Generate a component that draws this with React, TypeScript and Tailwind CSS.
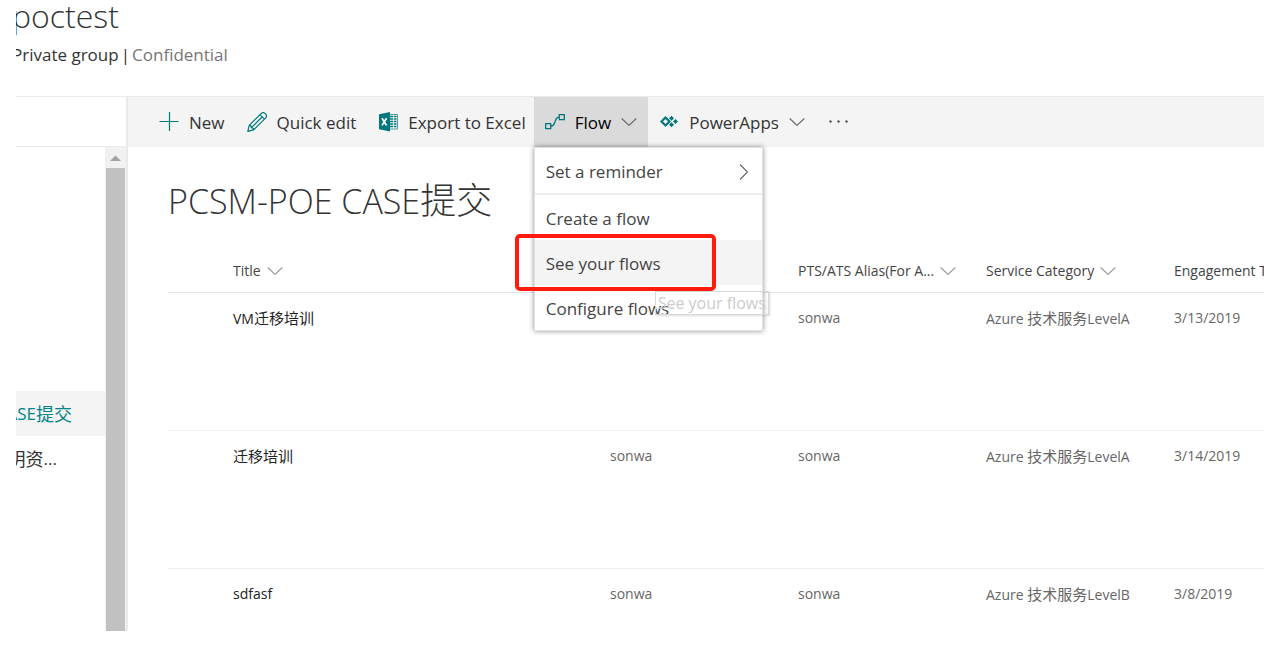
import React from 'react';

function Chevron({ className = '' }: { className?: string }) {
  return (
    <svg className={`h-2 w-4 shrink-0 ${className}`} viewBox="0 0 16 8" fill="none" stroke="currentColor" aria-hidden="true">
      <path d="M0.7 0.5 8 7.4l7.3-6.9" strokeWidth="1.1" />
    </svg>
  );
}

function PlusIcon() {
  return (
    <svg className="h-5 w-5 shrink-0 text-[#03787c]" viewBox="0 0 20 20" stroke="currentColor" aria-hidden="true">
      <path d="M0.5 9.500h19M10.500 0v19" strokeWidth="1.2" />
    </svg>
  );
}

function PencilIcon() {
  return (
    <svg className="h-5 w-5 shrink-0 text-[#03787c]" viewBox="0 0 20 20" fill="none" stroke="currentColor" strokeWidth="1.2" strokeLinejoin="round" aria-hidden="true">
      <path d="M0.8 19.3 2.2 13.4 14 1.6C15.2.4 17 .4 18.4 1.7 19.700 3.100 19.700 4.900 18.500 6.100L6.700 17.900Z" />
      <path d="M2.2 13.400c1.500.1 2.200.8 2.200 2.300 1.500 0 2.200.7 2.300 2.200M12.900 2.700l4.500 4.500M4.400 15.700 15 5" />
    </svg>
  );
}

function ExcelIcon() {
  return (
    <svg className="h-5 w-5 shrink-0 text-[#03787c]" viewBox="0 0 20 20" aria-hidden="true">
      <path d="M11 2.500h8.500v14.500H11z" fill="#f4f4f4" stroke="currentColor" strokeWidth="0.7" />
      <path d="M12 4.500h3M12 7h3M12 9.500h3M12 12h3M12 14.500h3M15.800 4.500h2.700M15.800 7h2.700M15.800 9.500h2.700M15.800 12h2.700M15.800 14.500h2.700" stroke="currentColor" strokeWidth="1.400" />
      <path d="M1 2.200 12 0v19.500L1 17.300z" fill="currentColor" />
      <path d="M4 6.200 8.500 13.400M8.500 6.200 4 13.400" stroke="#fff" strokeWidth="1.700" />
    </svg>
  );
}

function FlowIcon() {
  return (
    <svg className="h-5 w-5 shrink-0 text-[#03787c]" viewBox="0 0 20 20" fill="none" stroke="currentColor" strokeWidth="1.300" aria-hidden="true">
      <path d="M0.700 11.700h5v5h-5zM14.300 2.700h5v5h-5zM5.700 14.200c3.500 0 3-1.700 4.300-4.500s1-4.500 4.300-4.500" />
    </svg>
  );
}

function PowerAppsIcon() {
  return (
    <svg className="h-5 w-5 shrink-0 text-[#03787c]" viewBox="0 0 20 20" aria-hidden="true">
      <path d="M6.500 5.500 10.500 9.500 6.500 13.500 2.500 9.500z" fill="none" stroke="currentColor" strokeWidth="2.200" />
      <path d="M12.500 3.800 15 6.300 12.500 8.800 10 6.300zM12.500 10.200 15 12.700 12.500 15.200 10 12.700zM16.500 7l2.500 2.500-2.500 2.500L14 9.500z" fill="currentColor" />
    </svg>
  );
}

/* Sets runs of Chinese characters one step larger than the Latin text around them. */
function Mixed({ text, cjk }: { text: string; cjk: string }) {
  return (
    <>
      {text.split(/([\u4e00-\u9fff]+)/).map((part, i) =>
        i % 2 ? <span key={i} className={cjk}>{part}</span> : part,
      )}
    </>
  );
}

const commandClass = 'flex h-full items-center gap-[10px] pl-[11px] whitespace-nowrap';

function Command({ icon, label, menu = false, className = 'pr-[11px]' }: { icon: React.ReactNode; label: string; menu?: boolean; className?: string }) {
  return (
    <button type="button" className={`${commandClass} ${className}`}>
      {icon}
      <span className="pt-0.5">{label}</span>
      {menu && <Chevron className="text-[#666]" />}
    </button>
  );
}

function FlowMenu() {
  const item = 'flex h-[45px] w-full items-center px-[11px] pt-0.5 text-left';
  return (
    <ul className="absolute top-full left-0 z-10 w-[229px] border border-[#e2e2e2] bg-white text-[#444] shadow-[0_0_5px_rgba(0,0,0,0.45)]">
      <li className="border-b-2 border-[#eeeeee]">
        <button type="button" className={`${item} justify-between`}>
          Set a reminder
          <svg className="h-4 w-4" viewBox="0 0 16 16" fill="none" stroke="#666" aria-hidden="true">
            <path d="M5 0.500 12.500 8 5 15.500" strokeWidth="1.100" />
          </svg>
        </button>
      </li>
      <li>
        <button type="button" className={item}>Create a flow</button>
      </li>
      <li className="relative bg-[#f4f4f4]">
        <button type="button" className={item}>See your flows</button>
        <div className="pointer-events-none absolute -top-[6px] -left-5 h-[57px] w-[201px] rounded-[5px] border-4 border-[#ff1c0f]" />
        <div role="tooltip" className="absolute top-[51px] left-[120px] border border-[#d8d8d8] px-[2px] text-base leading-[22px] whitespace-nowrap text-[#ccc] shadow-[1px_1px_2px_rgba(0,0,0,0.15)]">
          See your flows
        </div>
      </li>
      <li>
        <button type="button" className={item}>Configure flows</button>
      </li>
    </ul>
  );
}

const rows = [
  { title: 'VM迁移培训', owner: '', alias: 'sonwa', category: 'Azure 技术服务LevelA', date: '3/13/2019' },
  { title: '迁移培训', owner: 'sonwa', alias: 'sonwa', category: 'Azure 技术服务LevelA', date: '3/14/2019' },
  { title: 'sdfasf', owner: 'sonwa', alias: 'sonwa', category: 'Azure 技术服务LevelB', date: '3/8/2019' },
];

function HeaderCell({ label, chevron = true }: { label: string; chevron?: boolean }) {
  return (
    <th className="overflow-hidden p-0 text-left font-normal">
      {label && (
        <button type="button" className="flex items-center gap-[6px] pt-0.5 whitespace-nowrap">
          {label}
          {chevron && <Chevron className="text-[#999]" />}
        </button>
      )}
    </th>
  );
}

function ListTable() {
  return (
    <table className="w-full table-fixed border-collapse text-sm text-[#666]">
      <colgroup>
        <col className="w-[65px]" />
        <col />
        <col className="w-[188px]" />
        <col className="w-[188px]" />
        <col className="w-[188px]" />
        <col className="w-[90px]" />
      </colgroup>
      <thead>
        <tr className="h-[43px] border-b border-[#e2e2e2] text-[#444]">
          <td />
          <HeaderCell label="Title" />
          <HeaderCell label="" />
          <HeaderCell label="PTS/ATS Alias(For A..." />
          <HeaderCell label="Service Category" />
          <HeaderCell label="Engagement Type" chevron={false} />
        </tr>
      </thead>
      <tbody>
        {rows.map((r, i) => (
          <tr key={i} className="h-[138px] border-b border-[#f0f0f0] align-top leading-5 last:h-[63px] last:border-b-0">
            <td />
            <td className="px-0 pt-[15px] text-[#222]"><Mixed text={r.title} cjk="text-[15px]" /></td>
            <td className="px-0 pt-[15px]">{r.owner}</td>
            <td className="px-0 pt-[15px]">{r.alias}</td>
            <td className="px-0 pt-[15px] whitespace-nowrap"><Mixed text={r.category} cjk="text-[15px]" /></td>
            <td className="px-0 pt-[15px]">{r.date}</td>
          </tr>
        ))}
      </tbody>
    </table>
  );
}

export default function App() {
  return (
    <div className="bg-white pr-[5px] pb-6 pl-4 font-['Open_Sans','Noto_Sans_CJK_SC',sans-serif] text-[#333]">
      <header className="h-24 overflow-hidden">
        <div className="-ml-1">
          <h1 className="text-[32px] leading-8 font-light">poctest</h1>
          <p className="flex gap-[2px] pt-[11px] text-[17px] leading-6">
            <span>Private group</span>
            <span>|</span>
            <span className="text-[#767676]">Confidential</span>
          </p>
        </div>
      </header>

      <div className="flex border-t border-[#eaeaea]">
        <aside className="w-[112px] shrink-0 border-r-2 border-[#eaeaea]">
          <div className="h-[50px] border-b border-[#eaeaea]" />
          <div className="flex h-[484px]">
            <nav className="flex min-w-0 flex-1 flex-col overflow-hidden pt-[244px] text-[17px]">
              <a href="#case" className="flex h-[45px] shrink-0 items-center justify-end bg-[#f4f4f4] pr-[33px] whitespace-nowrap text-[#038387]">
                <Mixed text="CASE提交" cjk="text-lg" />
              </a>
              <a href="#docs" className="flex h-[45px] shrink-0 items-center justify-end pr-12 whitespace-nowrap">
                <Mixed text="明资..." cjk="text-lg" />
              </a>
            </nav>
            <div className="flex w-[21px] flex-col bg-[#f1f1f1] px-px">
              <svg className="h-[21px] w-full shrink-0" viewBox="0 0 19 21" aria-hidden="true">
                <path d="M4 14h11L9.500 8.500z" fill="#a3a3a3" />
              </svg>
              <div className="flex-1 bg-[#c1c1c1]" />
            </div>
          </div>
        </aside>

        <main className="min-w-0 flex-1">
          <div className="flex h-[50px] items-center bg-[#f4f4f4] pl-5 text-[17px]">
            <Command icon={<PlusIcon />} label="New" />
            <Command icon={<PencilIcon />} label="Quick edit" />
            <Command icon={<ExcelIcon />} label="Export to Excel" className="pr-2" />
            <div className="relative h-full">
              <button type="button" aria-expanded="true" className={`${commandClass} bg-[#dadada] pr-[11px] text-black`}>
                <FlowIcon />
                <span className="pt-0.5">Flow</span>
                <Chevron className="text-[#666]" />
              </button>
              <FlowMenu />
            </div>
            <Command icon={<PowerAppsIcon />} label="PowerApps" menu className="pr-2" />
            <button type="button" aria-label="More" className="h-full px-4">
              <svg className="h-5 w-5" viewBox="0 0 20 20" fill="#555" aria-hidden="true">
                <circle cx="1.500" cy="9.500" r="1.200" />
                <circle cx="9.500" cy="9.500" r="1.200" />
                <circle cx="17.500" cy="9.500" r="1.200" />
              </svg>
            </button>
          </div>
          <div className="pl-10">
            <h2 className="pt-[30px] pb-6 text-[34px] leading-[48px] font-light">
              <Mixed text="PCSM-POE CASE提交" cjk="text-[36px]" />
            </h2>
            <ListTable />
          </div>
        </main>
      </div>
    </div>
  );
}
